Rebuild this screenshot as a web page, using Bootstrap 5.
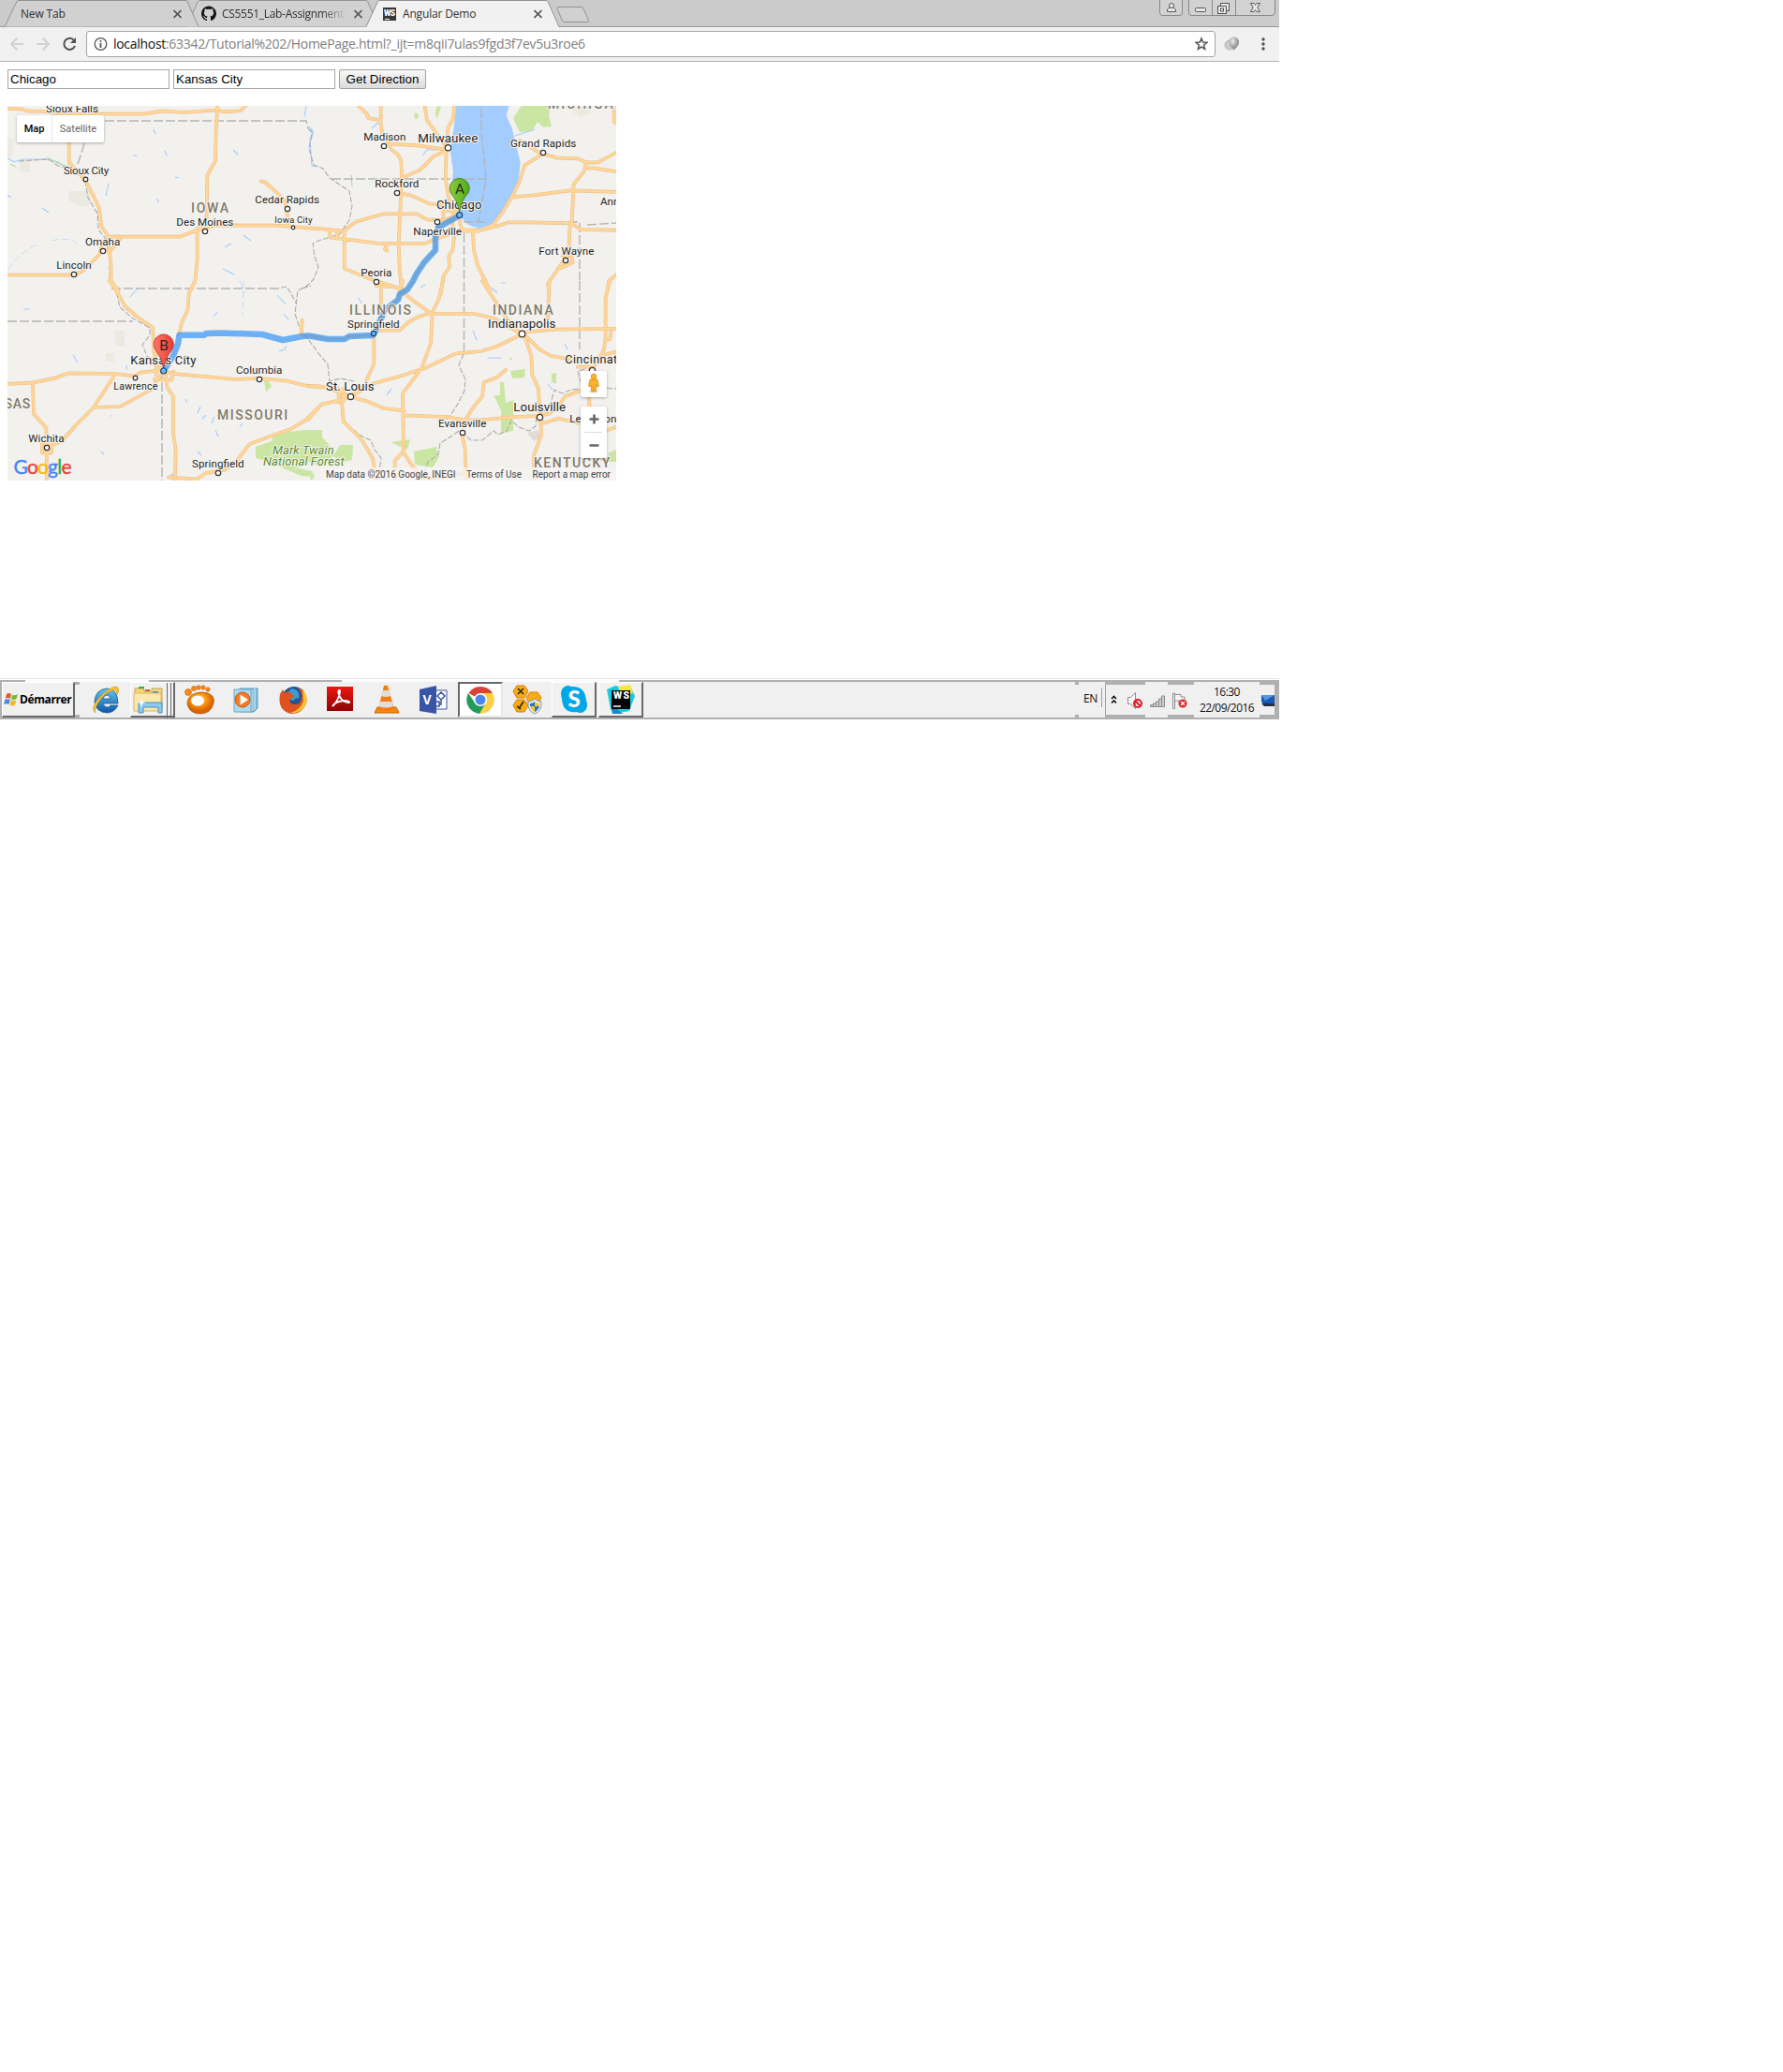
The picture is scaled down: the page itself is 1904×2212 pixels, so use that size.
<!DOCTYPE html>
<html lang="en">
<head>
<meta charset="utf-8">
<title>Angular Demo</title>
<link href="https://cdn.jsdelivr.net/npm/bootstrap@5.3.0/dist/css/bootstrap.min.css" rel="stylesheet">
<style>
body{background:#fff;font-family:"Open Sans","Noto Sans",sans-serif;color:#000;overflow:hidden}
svg{display:block;flex-shrink:0}
.desktop{width:1366px;height:768px}
.tabstrip{height:29px;background:#cbcbcb}
.strip-art{left:0;top:0;z-index:0}
.tab-row{height:28px;padding-left:22px;padding-top:5px;z-index:1;font-size:12px;line-height:20px;letter-spacing:-.17px;color:#303030}
.tab-a{width:193px}.tab-b{width:194px}.tab-c{width:185px}
.tab-name{width:133px;overflow:hidden;white-space:nowrap}
.wide-name{width:163px}
.demo-name{width:140px}
.fade-end{letter-spacing:-.3px;-webkit-mask-image:linear-gradient(90deg,#000 80%,transparent)}
.toolbar{height:37px;background:#f1f1f1;border-bottom:1px solid #b3b3b3;padding:4px 0 5px 11px}
.omnibox{width:1206px;height:28px;border:1px solid #a5a5a5;border-radius:3px;background:#fff;padding:0 7px}
.url{font-size:14px;line-height:26px;color:#808080;margin-left:6px;white-space:nowrap;letter-spacing:-.3px}
.url b{font-weight:400;color:#111}
.page-area{height:658px;padding:8px 8px 0}
.query{height:39px;gap:4px;font-family:"Liberation Sans",Arial,sans-serif}
.query input{width:173px;height:21px;border:1px solid #a6a6a6;padding:0 1px 1px 2px;font-size:13.33px;line-height:18px;color:#000;outline:0;border-radius:0;background:#fff}
.query button{width:93px;height:21px;padding:0;border:1px solid #a0a0a0;border-radius:2px;background:linear-gradient(#f8f8f8,#dcdcdc);font-size:13.33px;line-height:18px;color:#000}
.map{width:650px;height:400px;overflow:hidden;font-family:Roboto,sans-serif}
.map-type{left:10px;top:10px;height:29px;width:93px;background:#fff;border-radius:2px;box-shadow:0 1px 3px rgba(0,0,0,.3);font-size:11px;line-height:29px}
.map-type span{display:block;text-align:center}
.mt-map{width:38px;font-weight:500;border-right:1px solid #e4e4e4}
.mt-sat{width:55px;color:#666}
.pegman{left:612px;top:283px;width:28px;height:28px;background:#fff;border-radius:2px;box-shadow:0 1px 3px rgba(0,0,0,.3)}
.zoomer{left:612px;top:321px;width:28px;height:55px;background:#fff;border-radius:2px;box-shadow:0 1px 3px rgba(0,0,0,.3)}
.attrib{right:0;bottom:0;height:14px;background:rgba(245,245,245,.72);font-size:10px;line-height:15px;color:#444;white-space:nowrap;padding:0 6px;width:316px}
.taskbar{height:44px}
.task-art{left:0;top:0;z-index:0}
.task-row{height:38px;top:4px;left:0;z-index:1}
.startbtn{width:78px;height:38px;margin-left:2px;margin-right:8px;background:#f0f0f0;border:1px solid #fff;border-right:2px solid #696969;border-bottom:2px solid #696969;font-weight:700;font-size:12px;letter-spacing:-.4px;padding-left:1px}
.slot{width:50px;height:38px}
.raised{background:#f1f1f1;border:1px solid #fff;border-right:2px solid #696969;border-bottom:2px solid #696969;width:48px;margin:0 1px}
.sunken{background:#fff;border:2px solid #696969;border-right:2px solid #e8e8e8;border-bottom:2px solid #e8e8e8;width:48px;margin:0 1px}
.stack-edge{right:-2px;top:0}
.tray{font-size:12px;color:#111;margin-left:469px}
.lang{width:26px;letter-spacing:-.3px;padding-bottom:3px}
.clock{width:70px;line-height:17px;font-size:12px;letter-spacing:-.55px;padding-bottom:1px;text-align:center}
.halo text{paint-order:stroke;stroke:#f5f4f0;stroke-width:6px;stroke-linejoin:round}
</style>
</head>
<body>
<main class="desktop d-flex flex-column">
 <header class="tabstrip position-relative">
  <svg class="strip-art position-absolute" width="1366" height="29">
   <path d="M0 28.5H1366" stroke="#979797"/>
   <g stroke="#929292" fill="#d1d1d1">
    <path d="M199 28.5L211.500 1.500Q212 .5 213 .5H391Q392 .5 392.500 1.500L405 28.500"/>
    <path d="M5 28.5L18 1.500Q18.500 .5 19.500 .5H198Q199.500 .5 200 1.500L212 28.500"/>
    <path d="M602 7.500H620Q622 7.500 623 9L628.500 22Q629 23.500 627 23.500H603Q601.500 23.500 600.500 22L595 9.500Q594.500 7.500 597 7.500Z"/>
   </g>
   <path d="M391 29L403.500 1.500Q404 .5 405 .5H583Q584.500 .5 585 1.500L597 29Z" fill="#f1f1f1"/>
   <path d="M391 28.500L403.500 1.500Q404 .5 405 .5H583Q584.500 .5 585 1.500L597 28.500" fill="none" stroke="#929292"/>
   <g fill="#d2d2d2" stroke="#888"><path d="M1238.500 -2V13Q1238.500 16.500 1241 16.500H1260Q1262.500 16.500 1262.500 13V-2ZM1269.500 -2V13Q1269.500 16.500 1272 16.500H1358Q1361.500 16.500 1361.500 13V-2ZM1294.500 0V16M1319.500 0V16"/></g>
   <g fill="#e9e9e9" stroke="#555"><path d="M1246.500 12.500V10L1249 8H1253L1255.500 10V12.500Z"/><circle cx="1251" cy="6" r="2.500"/><rect x="1276.500" y="8.500" width="11" height="4" rx="1"/><rect x="1303.500" y="3.500" width="9" height="8"/><rect x="1300.500" y="6.500" width="9" height="8"/><rect x="1303.500" y="9" width="3" height="3"/><path d="M1335.500 3.500H1339L1340.500 5.500 1342 3.500H1345.500L1342.800 8 1345.500 12.500H1342L1340.500 10.500 1339 12.500H1335.500L1338.200 8Z"/></g>
  </svg>
  <div class="tab-row d-flex position-relative">
   <div class="tab-a d-flex"><span class="tab-name wide-name">New Tab</span><svg width="9" height="20" stroke="#555" stroke-width="1.700"><path d="M.5 6L8.500 14M8.500 6L.5 14"/></svg></div>
   <div class="tab-b d-flex"><svg width="22" height="20"><path transform="translate(0 1.500)" fill="#171717" d="M8 0C3.600 0 0 3.600 0 8c0 3.500 2.300 6.500 5.500 7.600.4.100.5-.2.500-.4v-1.500c-2 .5-2.500-.8-2.700-1.200-.1-.3-.5-1-.9-1.300-.3-.1-.7-.5 0-.5s1.100.6 1.200.8c.8 1.300 2 .9 2.400.7.100-.5.300-.9.600-1.100-1.900-.3-3.700-1-3.700-4 0-.9.300-1.600.8-2.200-.1-.2-.3-1 .1-2.100 0 0 .7-.2 2.200.8a7.500 7.500 0 0 1 4 0c1.500-1 2.200-.8 2.200-.8.400 1.100.2 1.900.1 2.100.5.600.8 1.300.8 2.200 0 3.100-1.900 3.700-3.700 4 .3.300.6.800.6 1.600v2.500c0 .2.100.5.500.4A8 8 0 0 0 8 0Z"/></svg><span class="tab-name fade-end">CS5551_Lab-Assignments</span><svg class="ms-1 ps-1" width="14" height="20" stroke="#555" stroke-width="1.700"><path d="M.5 6L8.500 14M8.500 6L.5 14"/></svg></div>
   <div class="tab-c d-flex"><svg width="21" height="20"><path d="M0 3H14V17H0Z" fill="#383838"/><path d="M2 15.500H7" stroke="#fff"/><text x="1" y="11.500" fill="#fff" font-family="Roboto" font-weight="900" font-size="8.500" textLength="12">WS</text></svg><span class="tab-name demo-name">Angular Demo</span><svg width="9" height="20" stroke="#555" stroke-width="1.700"><path d="M.5 6L8.500 14M8.500 6L.5 14"/></svg></div>
  </div>
 </header>
 <nav class="toolbar d-flex align-items-center">
  <svg width="81" height="20" fill="none" stroke-width="2"><path d="M14 10H1.500M7.500 3.500L1 10 7.500 16.500M28 10H40.500M34.500 3.500L41 10 34.500 16.500" stroke="#d2d2d2"/><path d="M67.500 5.500A6 6 0 1 0 69 12" stroke="#505050"/><path d="M70 3V9H64Z" fill="#505050"/></svg>
  <div class="omnibox d-flex align-items-center">
   <svg width="15" height="16"><circle cx="7.500" cy="8" r="6.300" fill="none" stroke="#555" stroke-width="1.300"/><path d="M7.500 7V12M7.500 4V5.700" stroke="#555" stroke-width="1.800"/></svg>
   <span class="url"><b>localhost</b>:63342/Tutorial%202/HomePage.html?_ijt=m8qii7ulas9fgd3f7ev5u3roe6</span>
   <svg class="ms-auto" width="14" height="16"><path d="M7 2L8.600 6 13 6.300 9.600 9 10.700 13.300 7 11 3.300 13.300 4.400 9 1 6.300 5.400 6Z" fill="none" stroke="#555" stroke-width="1.500"/></svg>
  </div>
  <svg width="60" height="20"><defs><radialGradient id="gray" cx=".4" cy=".3"><stop stop-color="#ededed"/><stop offset="1" stop-color="#949494"/></radialGradient></defs><ellipse cx="15" cy="11" rx="5" ry="5" fill="#ccc" stroke="#b5b5b5"/><path d="M14 7A5.500 5.500 0 1 1 25 9Q24 13 19 17Q19 14 16 13Z" fill="url(#gray)"/><g fill="#505050"><circle cx="51" cy="5" r="1.700"/><circle cx="51" cy="10" r="1.700"/><circle cx="51" cy="15" r="1.700"/></g></svg>
 </nav>
 <section class="page-area">
  <form class="query d-flex align-items-start">
   <input type="text" value="Chicago" aria-label="From"><input type="text" value="Kansas City" aria-label="To"><button type="button">Get Direction</button>
  </form>
  <div class="map position-relative">
   <svg width="650" height="400" viewBox="8 113 650 400">
    <defs>
     <g id="roads" fill="none" stroke-linejoin="round" stroke-linecap="round">
      <path transform="translate(0 100) scale(.33333)" d="M20 48L70 49 85 55 150 57 190 65H465L520 55 590 60 700 52 715 58 770 55 790 36M697 36L692 120 690 215 664 262 662 400 632 432V530L625 600 610 630M221 110V220L262 265 280 290 298 325 317 365 325 425 342 450 345 475 350 500 355 540 356 600 380 632M345 458H575L632 437 690 422H880L1025 433M20 581H240L270 565 318 515 325 490M350 508L388 462M330 503L352 500M836 281L850 284 890 320 915 350 922 400V422M632 430H662"/>
      <path transform="translate(330 100) scale(.33333)" d="M155 36L185 65 190 78 228 85 235 130 258 160 350 166 435 178M230 36V85M258 160L262 178 285 195 295 215 297 265 292 380 287 480 290 560 297 635M370 36L378 85 400 115 435 165M465 36L462 80 445 110 440 178 437 270 447 330 460 365 480 390M440 183L400 200 355 245 300 268M282 318L325 325 385 352 425 355M30 432L110 440 150 410 240 385H345L380 403 430 405 480 390M65 440L68 460 110 465 225 480H370L420 460 490 440M90 440V465M113 440V560L200 595 280 620 300 635M240 480L248 490 243 498 250 503M465 460L460 500 448 520 450 555 430 585 423 640M525 445L528 500 540 550 580 630M745 195L690 230 675 280 650 330 620 380 590 420 545 440H490L480 395M675 150L740 190 790 205 860 208 890 220 925 220 990 186M890 220L880 250 848 290 842 410 835 430 832 520 805 550 765 610 770 635M885 221V238H910L990 250M650 332L720 325 835 310 990 315M490 436L545 438 600 425 640 412H700L840 415 870 435 990 438M812 520L840 515 845 540 815 555 798 560M990 575L960 600 955 640M977 50V90L988 98M430 370V400M430 375H475M460 350V440M410 425L425 440"/>
      <path transform="translate(0 300) scale(.33333)" d="M350 -2L378 40 400 80 440 115 490 150 492 220 500 260 524 288M625 0L605 40 602 90 582 135 574 170M20 330L105 326 180 310 220 295 370 297 430 305 450 293 524 285M370 297L345 335 300 405 240 465 200 510 150 535M300 405L385 402 435 375 490 345 500 320 524 290M105 326L108 425 148 470 150 645M524 290L570 298 755 315 830 312 920 320 980 335 1030 338M495 315L550 317 555 290M500 215V300M530 290L535 340 555 370V490L563 540 560 645M1020 405L980 445 930 475 880 492 800 522 755 580 720 605 660 615 630 635 540 628M968 125L965 170M135 520H165V550H135Z"/>
      <path transform="translate(330 300) scale(.33333)" d="M215 15L280 20 330 60 385 100 405 105H530L595 120 680 170M230 18L232 160M430 -2L415 60 395 100 390 200 360 280 300 360 303 545 275 575V645M208 165V265L190 305 180 330 135 370M210 158H290L320 130 350 115 390 103M555 0L600 70 640 130 680 170M770 0L765 120M680 165L790 155 990 153M680 172L600 210 550 225 470 232 370 280 290 305 200 330 135 370M690 172L712 240 715 300 735 345 740 435M690 172L740 220 775 240 855 253M965 -2L950 50V180L945 220 915 270 900 290M990 225L950 235M968 153L965 185 950 190M0 337L50 340 135 370M-4 445L40 395 110 380 135 370M135 372L180 383 240 408 305 415M305 430L440 435 500 445H550L660 435 740 432M105 385L110 450 170 510 205 570 215 645M300 545L330 590 370 645M500 445L530 400 555 370 560 325 600 310 630 285M490 490L500 540 503 645M370 635L500 615M740 440L745 490 720 560 722 645M740 435L750 455 800 440 865 455M740 430L770 425 800 400 820 370 900 340M900 290L895 340 898 400M940 570L920 545M95 345V390M110 345V385M95 370H130M300 0L292 40M950 480L990 465M860 275H900V300"/>
     </g>
     <linearGradient id="green"><stop stop-color="#86cb3e"/><stop offset="1" stop-color="#53ad19"/></linearGradient>
     <linearGradient id="red"><stop stop-color="#ff776b"/><stop offset="1" stop-color="#e83b33"/></linearGradient>
    </defs>
    <path fill="#f2f1ee" d="M8 113H658V513H8Z"/>
    <g fill="#ece9e1"><path d="M8 146L15 150 13 168 8 170ZM21 172H32V184H21ZM73 204H95L98 218 88 221 73 215ZM122 353H133V371L123 368ZM113 377H122V386H113ZM612 113H630V121L620 125 612 120Z"/><path d="M563 462L575 459 577 468 570 471Z" fill="#dfddd3"/></g>
    <g fill="#cbe6a3"><path d="M557 113H588L586 123 589 135 580 136 574 130 568 140 555 141 550 131 548 126ZM443 120L447 122 446 127 442 126ZM466 114L471 113 467 126 465 123Z"/><path d="M282 406L286 406 290 412 284 419ZM273 477L290 471 293 463 325 459H344V467L350 473 357 485 363 475 377 475 376 491 367 493 355 487 344 498 330 493 310 503 284 492 273 489ZM310 503L318 500 333 503 336 509 322 508Z"/><path d="M442 482L466 477 469 488 462 499 443 496ZM417 472L438 469 435 480ZM534 408L538 408 540 430 548 427V460L535 463V438L527 422H534ZM545 396L561 394 560 403 547 404ZM543 381L548 383 545 385ZM589 399L594 398V410L589 408ZM650 483L658 480V493H650ZM330 505L336 510 332 513Z"/></g>
    <path transform="translate(330 100) scale(.33333)" fill="#a3ccff" d="M472 36L465 100 452 180 462 250 458 290 470 340 490 400 510 420 545 432 590 415 640 355 670 290 677 220 650 110 632 70 642 36Z"/>
    <g fill="none" stroke="#a3ccff" stroke-width="1.100">
     <path d="M8 169L15 173 24 170 50 170 62 173 70 178M327 113L325 125M331 138Q337 142 331 149L333 177 340 178M45 163M164 138L166 143M142 166H147M176 161L178 166M249 160L254 165M187 189L191 190M116 196L113 209M167 212L170 216M45 222L52 227M8 208L12 211M240 264L247 260M260 251L268 257M238 287L250 293"/>
     <path d="M8 288Q26 265 41 261M55 257Q76 252 84 262M256 300L262 313M260 300L259 336" stroke-width=".6" stroke-dasharray="8 3"/>
     <path d="M139 317L146 309M228 338L232 333M78 379L83 387M135 390V395M25 330H32M296 315L305 325M303 335L308 341M298 375L304 373 306 369M198 426L200 430M211 441L214 434M216 447L220 443M226 452L229 445M230 459L233 466M118 444H120M108 482L111 485M182 508L185 506V513M211 482L215 486M256 456L259 452M550 145L571 138M466 160H456L451 166M397 137L404 131M342 175M330 136Q338 140 331 150M375 187L376 199M535 302H540M505 353L509 363M521 382L535 382M413 422L418 415 414 420M525 307L531 313M603 367L606 373M585 410L590 416M432 452V456M383 318L386 324M449 307L454 304M618 270L620 265"/>
     <path d="M11 175L17 178M50 168L62 174 76 179" stroke="#b7db98"/>
    </g>
    <g fill="none" stroke="#b4b4b2" stroke-width="1.400" stroke-dasharray="10 3">
     <path d="M112 129H327L329 137M119 308H300M8 343H142M354 191H519M514 116V140L519 191 511 236M495 237H520M555 237H619V299M619 300V373M627 240L658 238M495.500 249V378M173 395V513M90 153L88 160 83 175"/>
    </g>
    <g fill="none" stroke="#ababab" stroke-width="1.100" stroke-dasharray="6 2">
     <path d="M329 137L333 142 330 159 335 176 345 180 352 190 373 204 376 220 373 235 363 250 340 257 334 260 336 274 340 285 335 298 328 305 318 310 315 335 320 350 340 377 350 389 352 407 364 404 378 407M91 193L94 211 104 228 105 245 112 254 117 273 117 300 124 310 128 328 142 340 160 350 160 358 152 368 157 380 166 388M300 307L306 306 310 312 317 325M323 308L332 305"/>
     <path d="M495 378L490 390 497 405 496 417 489 431 482 442 477 448M490 460L480 467 470 473 468 485 457 493 451 513M493 461L503 470 515 470 527 460 532 464 541 460 546 449 554 456 565 460 572 455 573 445 587 434 592 416 600 420 610 416 622 415 617 396 626 394M367 440L365 446 374 456 385 465 396 470 400 480 407 489 405 503 413 513M640 414L658 415M20 172L52 170 62 177 75 180"/>
    </g>
    <use href="#roads" stroke="#efbd82" stroke-width="11"/>
    <use href="#roads" stroke="#ffd699" stroke-width="7.500"/>
    <path d="M490.700 230L468 243 465 252 465 267 453 280 445 292 441 300 435 309 427 314 425 320 410 332 408 338 400 355 398 358 373 359 368 362 350 362 330 358.500 323 359 302 363 280 357 237 355.500 220 356 218 357.700H191.500L190 367 185 380 174.700 396" fill="none" stroke="#3997fa" stroke-opacity=".72" stroke-width="6.500" stroke-linejoin="round"/>
    <path d="M490.700 230L468 243 465 252 465 267 453 280 445 292 441 300 435 309 427 314 425 320 410 332 408 338 400 355 398 358 373 359 368 362 350 362 330 358.500 323 359" stroke="#7298b5" stroke-opacity=".45" stroke-width="3.500" fill="none"/>
    <g fill="#fff" stroke="#333" stroke-width="1.200">
     <g><circle cx="91.500" cy="191.500" r="2.300"/><circle cx="110" cy="268" r="2.700"/><circle cx="79" cy="293" r="2.700"/><circle cx="219" cy="247" r="2.700"/><circle cx="307" cy="223" r="2.700"/><circle cx="313" cy="243" r="1.800"/><circle cx="410" cy="156" r="2.700"/><circle cx="478.500" cy="157.700" r="3.100"/><circle cx="424" cy="206" r="2.700"/><circle cx="467" cy="237" r="2.700"/><circle cx="580" cy="163" r="2.700"/><circle cx="604" cy="278" r="2.700"/><circle cx="402" cy="301" r="2.700"/><circle cx="144.500" cy="403.500" r="2.300"/><circle cx="277" cy="405" r="2.700"/><circle cx="50" cy="478" r="2.700"/><circle cx="233" cy="505" r="2.700"/><circle cx="374.500" cy="423.500" r="3.100"/><circle cx="494" cy="462" r="2.700"/><circle cx="576.500" cy="445.500" r="3.100"/><circle cx="557.500" cy="356.500" r="3.300"/><circle cx="632.500" cy="395.500" r="3.100"/></g>
     <g fill="#73b5f5" stroke="#164b7b"><circle cx="490.700" cy="229.700" r="3"/><circle cx="399" cy="356" r="2.600"/><circle cx="174.700" cy="396" r="3"/></g>
    </g>
    <g class="halo" fill="#262626" font-family="Roboto, sans-serif" font-size="35">
     <g transform="translate(0 100) scale(.33333)"><text x="147" y="60" textLength="168">Sioux Falls</text><text x="204" y="258" textLength="145">Sioux City</text><text x="565" y="422" textLength="183">Des Moines</text><text x="817" y="351" textLength="206">Cedar Rapids</text><text x="880" y="415" font-size="29" textLength="121">Iowa City</text><text x="273" y="486" textLength="112">Omaha</text><text x="181" y="561" textLength="112">Lincoln</text></g>
     <g transform="translate(330 100) scale(.33333)"><text x="175" y="150" textLength="135">Madison</text><text x="349" y="155" font-size="40" textLength="192">Milwaukee</text><text x="645" y="171" textLength="211">Grand Rapids</text><text x="211" y="300" textLength="141">Rockford</text><text x="408" y="368" font-size="39" textLength="145">Chicago</text><text x="334" y="452" textLength="155">Naperville</text><text x="736" y="515" textLength="177">Fort Wayne</text><text x="166" y="585" textLength="99">Peoria</text><text x="933" y="356">Ann</text></g>
     <g transform="translate(0 300) scale(.33333)"><text x="418" y="268" font-size="39" textLength="210">Kansas City</text><text x="364" y="347" font-size="32" textLength="141">Lawrence</text><text x="756" y="297" textLength="148">Columbia</text><text x="91" y="515" textLength="115">Wichita</text><text x="615" y="596" textLength="167">Springfield</text></g>
     <g transform="translate(330 300) scale(.33333)"><text x="123" y="149" textLength="167">Springfield</text><text x="573" y="149" font-size="40" textLength="217">Indianapolis</text><text x="820" y="265" font-size="38" textLength="178">Cincinnati</text><text x="54" y="350" font-size="40" textLength="155">St. Louis</text><text x="655" y="416" font-size="40" textLength="167">Louisville</text><text x="414" y="468" textLength="154">Evansville</text><text x="835" y="454" textLength="150">Lexington</text></g>
     <g fill="#81796b" font-weight="500" font-size="42"><g transform="translate(0 100) scale(.33333)"><text x="612" y="381" textLength="120">IOWA</text></g><g transform="translate(330 100) scale(.33333)"><text x="765" y="47" textLength="245">MICHIGAN</text></g><g transform="translate(0 300) scale(.33333)"><text x="-78" y="408" textLength="175">KANSAS</text><text x="696" y="444" textLength="226">MISSOURI</text></g><g transform="translate(330 300) scale(.33333)"><text x="129" y="108" textLength="198">ILLINOIS</text><text x="588" y="108" textLength="194">INDIANA</text><text x="720" y="597" textLength="244">KENTUCKY</text></g></g>
     <g fill="#5b8d31" font-style="italic" font-size="39" transform="translate(0 300) scale(.33333)"><text x="873" y="555" textLength="197">Mark Twain</text><text x="843" y="592" textLength="260">National Forest</text></g>
    </g>
    <path d="M490.700 226Q489 215 481.500 206A10.500 10.500 0 1 1 500 206Q492 215 490.700 226Z" fill="url(#green)" stroke="#35770c" stroke-width=".8"/>
    <path d="M174.700 393Q173 382 165.500 372.500A10.500 10.500 0 1 1 184 372.500Q176.500 382 174.700 393Z" fill="url(#red)" stroke="#a42821" stroke-width=".8"/>
    <g fill="#2e2525" font-family="Roboto" font-size="15.500" text-anchor="middle"><text x="491" y="206.500">A</text><text x="175" y="373.500">B</text></g>
    <text x="14.500" y="505.500" font-family="Lato, sans-serif" font-size="21" textLength="62" stroke-width=".4"><tspan fill="#4285f4" stroke="#4285f4">G</tspan><tspan fill="#ea4335" stroke="#ea4335">o</tspan><tspan fill="#fbbc05" stroke="#fbbc05">o</tspan><tspan fill="#4285f4" stroke="#4285f4">g</tspan><tspan fill="#34a853" stroke="#34a853">l</tspan><tspan fill="#ea4335" stroke="#ea4335">e</tspan></text>
   </svg>
   <div class="map-type d-flex position-absolute"><span class="mt-map">Map</span><span class="mt-sat">Satellite</span></div>
   <div class="pegman position-absolute"><svg width="28" height="28" stroke="#cf7c12" stroke-width=".6"><ellipse cx="14" cy="22" rx="5" ry="1.500" fill="#e2e2e2" stroke="none"/><path d="M10 9H18L19.500 16 18 17 17 15 16.500 22H11.500L11 15 10 17 8.500 16Z" fill="#fbb22b"/><path d="M14 16V22" /><circle cx="14" cy="6" r="2.900" fill="#fbb22b"/></svg></div>
   <div class="zoomer position-absolute"><svg width="28" height="55"><path d="M9.500 13.500H19.500M14.500 8.500V18.500M9.500 41.500H19.500" stroke="#666" stroke-width="2.600"/><path d="M4 27.500H23" stroke="#ddd"/></svg></div>
   <div class="attrib d-flex justify-content-between position-absolute"><span>Map data ©2016 Google, INEGI</span><span>Terms of Use</span><span>Report a map error</span></div>
  </div>
 </section>
 <footer class="taskbar position-relative">
  <svg class="task-art position-absolute" width="1366" height="44" shape-rendering="crispEdges">
   <path d="M0 0H1366V1H0Z" fill="#e3e3e3"/><path d="M0 2H1366V44H0Z" fill="#b0b0b0"/><path d="M27 2H159V4H27ZM365 2H661V4H365Z" fill="#fafcff"/>
   <path d="M85 4H1148V42H85ZM80 7H86V39H80ZM1148 7H1152V39H1148ZM1152 4H1180V42H1152ZM1180 7H1361V39H1180ZM1223 4H1247V42H1223ZM1275 4H1345V42H1275Z" fill="#f0f0f0"/>
   <path d="M1176.500 10V31M1180.500 7V39" stroke="#a0a0a0"/>
  </svg>
  <div class="task-row d-flex align-items-center position-absolute">
   <div class="startbtn d-flex align-items-center"><svg width="17" height="16"><path d="M3 2Q6 0 8 2L7 7Q4 5 1.500 7Z" fill="#e65b2c"/><path d="M9 3Q12 4 15 2L13.500 7Q11 9 8 7.500Z" fill="#72b83b"/><path d="M1.300 8Q4 6.500 6.800 8L5.500 13Q3 11.500 0 13Z" fill="#4a8bd6"/><path d="M7.800 8.500Q11 10 13.300 8.500L12 13.500Q9 15.500 6.500 13.500Z" fill="#f5b627"/></svg><span>Démarrer</span></div>
   <div class="slot d-flex align-items-center justify-content-center">
    <svg width="30" height="32" viewBox="0 0 30 32"><defs><linearGradient id="ieb" x2="0" y2="1"><stop stop-color="#65c6f4"/><stop offset="1" stop-color="#0d57a4"/></linearGradient></defs><path d="M28 20H12Q13 24 17 24Q19 24 20 22H28Q24 30 16 30Q4 29 3 18Q4 5 16 4Q28 5 28 20ZM12 15H20Q19 11 16 11Q13 11 12 15Z" fill="url(#ieb)" fill-rule="evenodd" stroke="#145b9e" stroke-width=".8"/><path d="M4 30Q-2 26 7 15Q16 4 25 2Q31 2 27 11Q27 5 22 6Q14 8 7 19Q2 27 4 30Z" fill="#f7c52f" stroke="#c18d17" stroke-width=".6"/></svg></div>
   <div class="slot raised d-flex align-items-center justify-content-center position-relative">
    <svg class="me-2" width="33" height="32"><path d="M2 4H11L12 7H20V4H31V26H2Z" fill="#f5d680" stroke="#c8a146"/><path d="M6 2H12V4H6Z" fill="#37ad3e"/><path d="M13 5H18V7H13Z" fill="#d9573e"/><path d="M21 7H27V9H21Z" fill="#4a90cf"/><path d="M1 9H30V28H1Z" fill="#fae8ac" stroke="#d8b75e"/><path d="M6 30V19H31V30H27V24H11V30Z" fill="#8bcaf0" stroke="#4e8fbc"/><path d="M9 13L10 18 14 19 10 20 9 25 8 20 4 19 8 18Z" fill="#fff"/></svg>
    <svg class="stack-edge position-absolute" width="10" height="38" shape-rendering="crispEdges"><path d="M1.500 0V38M5.500 0V38M8.500 0V38" stroke="#696969"/></svg></div>
   <div class="slot d-flex align-items-center justify-content-center"><svg width="32" height="32"><defs><radialGradient id="gom" cx=".45" cy=".35"><stop stop-color="#ffe17a"/><stop offset=".5" stop-color="#ff9a17"/><stop offset="1" stop-color="#dc6500"/></radialGradient></defs><g fill="#f88a12" stroke="#b25000" stroke-width=".5"><circle cx="4" cy="8" r="3.500"/><circle cx="10" cy="4" r="2.500"/><circle cx="15" cy="3" r="2.300"/><circle cx="20" cy="3" r="2.200"/><circle cx="25" cy="5" r="2.200"/></g><path d="M3 20Q3 12 12 9Q17 7 25 9Q33 12 31 20Q28 31 17 31Q5 31 3 20Z" fill="url(#gom)" stroke="#8d4300" stroke-width=".6"/><ellipse cx="14" cy="17" rx="7" ry="5.500" fill="#fff"/></svg></div>
   <div class="slot d-flex align-items-center justify-content-center"><svg width="30" height="30"><path d="M8 3H27V24L23 28H9Z" fill="#88bddd" stroke="#5598bd"/><path d="M24 3V26M21 5V27" stroke="#d2ecf8"/><path d="M2 4H20V28H2Z" fill="#acd9ef" stroke="#6aaacb"/><circle cx="11" cy="15" r="8" fill="#f37c27" stroke="#cb5610"/><path d="M8.500 9.500V20.500L17 15Z" fill="#fff"/></svg></div>
   <div class="slot d-flex align-items-center justify-content-center"><svg width="32" height="32"><circle cx="17" cy="15" r="13" fill="#25538e"/><path d="M14 4Q24 5 22 15Q18 13 17 17Q10 16 9 10Z" fill="#3d9cd5"/><path d="M2 10L5 5 7 9Q12 5 14 10L18 12 13 15Q11 21 18 21Q26 21 25 10L21 3Q33 9 30 20Q25 32 14 31Q-1 28 2 10Z" fill="#df511e"/><path d="M26 4Q34 14 28 24Q22 31 13 30Q24 27 27 17Z" fill="#f8c62c"/></svg></div>
   <div class="slot d-flex align-items-center justify-content-center"><svg width="30" height="30"><defs><linearGradient id="pdf" x2="0" y2="1"><stop stop-color="#ef1710"/><stop offset="1" stop-color="#8e0404"/></linearGradient></defs><path d="M1 1H29V27H1Z" fill="url(#pdf)"/><path d="M7 22Q11 19 14 11Q16 4 14 5Q12 6 15 12Q18 18 25 18Q26 16 19 16Q10 17 7 22Z" fill="none" stroke="#fff" stroke-width="1.800"/></svg></div>
   <div class="slot d-flex align-items-center justify-content-center"><svg width="30" height="32"><path d="M5 24H25L28 30H2Z" fill="#f58a14" stroke="#c56100"/><path d="M12 1Q14 0 16 1L23 26Q14 30 6 26Z" fill="#f47d12"/><path d="M10.500 6H17.500L19 12Q14 14 9 12ZM7.500 18H20.500L22 23Q14 26 6 23Z" fill="#dedede"/></svg></div>
   <div class="slot d-flex align-items-center justify-content-center"><svg width="32" height="32"><path d="M17 6H30V26H17Z" fill="#fff" stroke="#3855a5"/><path d="M18 23V18H22V23ZM24 8L28 12 24 16 20 12ZM24 16V21H22" fill="none" stroke="#3855a5" stroke-width="1.500"/><path d="M1 5L19 1V31L1 28Z" fill="#3855a5"/><text x="4.500" y="21" font-family="Open Sans" font-weight="700" font-size="14" fill="#fff">V</text></svg></div>
   <div class="slot sunken d-flex align-items-center justify-content-center"><svg width="30" height="30"><path d="M15 15L2.500 8A15 15 0 0 1 28 8H15Z" fill="#d94436"/><path d="M15 15V8H28A15 15 0 0 1 14 30L21 18Z" fill="#ffcf48"/><path d="M15 15L21 18 14 30A15 15 0 0 1 2 8L9 18Z" fill="#229b59"/><circle cx="15" cy="15" r="7" fill="#fff"/><circle cx="15" cy="15" r="5.500" fill="#4b87ec"/></svg></div>
   <div class="slot d-flex align-items-center justify-content-center"><svg width="32" height="32"><g fill="#f8ad17" stroke="#d87c00"><path d="M5 1H13L17 7 13 14H5L1 7ZM19 8H27L31 14 27 21H19L15 14ZM5 16H13L17 22 13 29H5L1 22Z"/></g><path d="M6 4L12 10M12 4L6 10M12 18L8 24M5 23L9 26" stroke="#392b12" stroke-width="1.700"/><path d="M17 18Q21 18 24 15Q27 18 31 18Q32 28 24 31Q16 28 17 18Z" fill="#eee" stroke="#8095a8"/><path d="M19 20Q22 20 24 18V23H19ZM24 23H29Q28 27 24 29Z" fill="#2778ca"/><path d="M24 18Q26 20 29 20V23H24ZM19 23H24V29Q20 27 19 23Z" fill="#f4c62b"/></svg></div>
   <div class="slot raised d-flex align-items-center justify-content-center"><svg width="30" height="30"><path d="M5 1Q9 -1 12 1Q27 0 28 16Q30 20 28 25Q24 31 18 28Q3 30 2 14Q-1 5 5 1Z" fill="#00a8e8"/><text x="15" y="23" text-anchor="middle" font-family="Lato" font-weight="900" font-size="24" fill="#fff">S</text></svg></div>
   <div class="slot raised d-flex align-items-center justify-content-center"><svg width="32" height="32"><path d="M1 5L10 1 18 3 26 1 31 12 28 20 25 28 9 31 5 26Z" fill="#18cce0"/><path d="M13 2L26 0 29 9 16 12Z" fill="#f5e83d"/><path d="M5 20L18 31H7Z" fill="#1a87ca"/><path d="M6 6H26V26H6Z" fill="#050505"/><path d="M8 23H16" stroke="#fff" stroke-width="1.500"/><text x="8" y="15" font-family="Roboto" font-weight="900" font-size="10.500" textLength="17" fill="#fff">WS</text></svg></div>
   <div class="tray d-flex align-items-center">
    <span class="lang">EN</span>
    <svg width="92" height="26"><path d="M4 10L6.500 7.500 9 10M4 14.500L6.500 12 9 14.500" transform="translate(0 2)" fill="none" stroke="#111" stroke-width="1.600"/><g fill="#f8f8f8" stroke="#8d8d8d"><path d="M21.500 10.500H24.500L29.500 5.500V22.500L24.500 17.500H21.500Z"/><path d="M45.500 20V18.500H48.500V20.500H45.500ZM48.500 17H51.500V20.500H48.500ZM51.500 15H54.500V20.500H51.500ZM54.500 12H57.500V20.500H54.500ZM57.500 9H60.500V20.500H57.500Z" fill="#ccc"/><path d="M69.500 6V22.500H71.500V6ZM71.500 7.500H78V10H82V16H76V14H71.500Z"/></g><circle cx="32" cy="17" r="4" fill="none" stroke="#e21c23" stroke-width="2"/><path d="M29 14L35 20" stroke="#e21c23" stroke-width="2"/><circle cx="80" cy="17" r="4.500" fill="#df2525"/><path d="M78 15L82 19M82 15L78 19" stroke="#fff" stroke-width="1.300"/></svg>
    <div class="clock">16:30<br>22/09/2016</div>
    <svg width="16" height="20"><path d="M2 5H16V15H4L2 12Z" fill="#1859b4"/><path d="M2 5H16L6 11Z" fill="#5598df"/><path d="M2 14H16V17H5Z" fill="#222e4a"/></svg>
   </div>
  </div>
 </footer>
</main>
<script src="https://cdn.jsdelivr.net/npm/bootstrap@5.3.0/dist/js/bootstrap.bundle.min.js"></script>
</body>
</html>
